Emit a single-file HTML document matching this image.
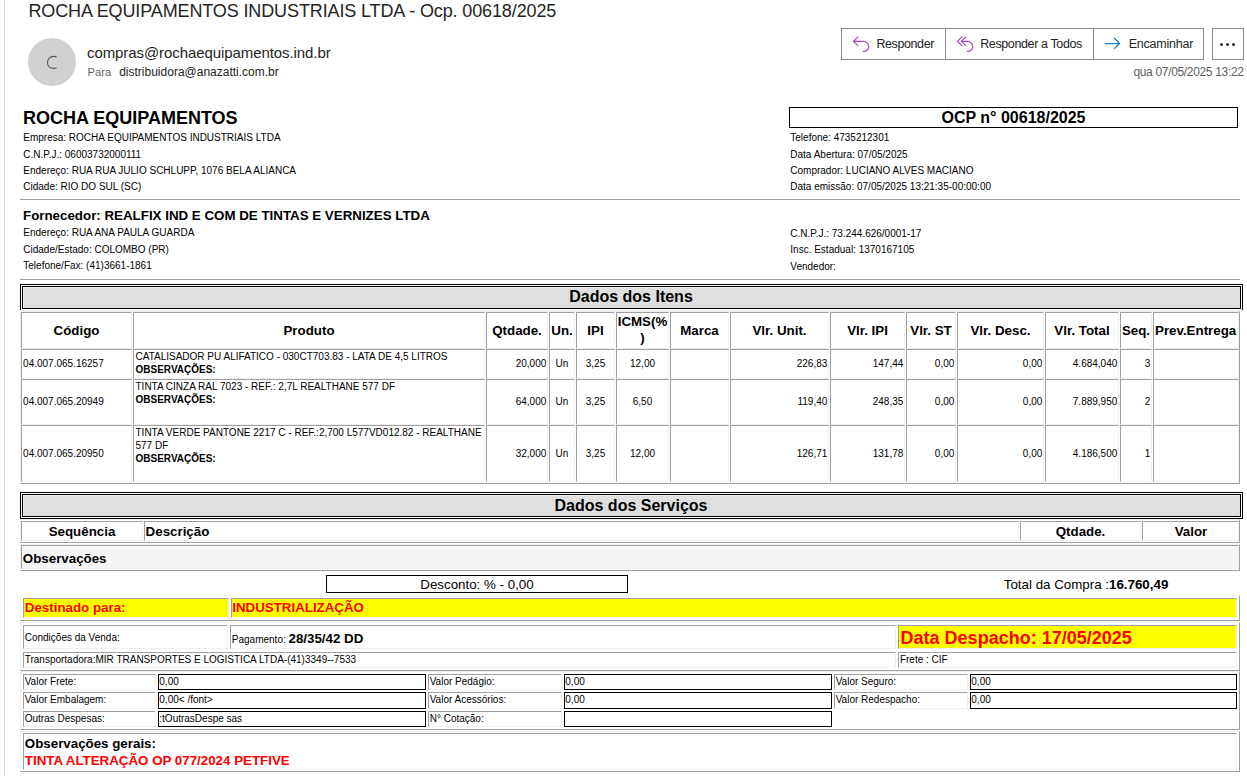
<!DOCTYPE html>
<html><head><meta charset="utf-8">
<style>
*{margin:0;padding:0;box-sizing:border-box}
html,body{width:1247px;height:776px;overflow:hidden;background:#fff}
body{font-family:"Liberation Sans",sans-serif;color:#000;position:relative}
.r{position:absolute}
.t{position:absolute;white-space:nowrap}
svg{position:absolute}
</style></head><body>

<div class="r" style="left:4px;top:0;width:1px;height:776px;background:#d6d6d6"></div>
<div class="t" style="left:28.4px;top:1.56px;font-size:18px;line-height:18px;color:#242424;letter-spacing:-0.12px;">ROCHA EQUIPAMENTOS INDUSTRIAIS LTDA - Ocp. 00618/2025</div>
<div class="r" style="left:28px;top:38px;width:48px;height:48px;border-radius:50%;background:#d1d1d1"></div>
<svg style="left:40px;top:50px" width="24" height="26" viewBox="0 0 24 26"><path d="M16.6 7.1 C15.7 6.6 14.7 6.4 13.6 6.4 C10 6.4 7.5 9 7.5 12.5 C7.5 16 10 18.4 13.4 18.4 C14.7 18.4 15.7 18.2 16.6 17.7" fill="none" stroke="#555" stroke-width="1.1"/></svg>
<div class="t" style="left:87px;top:45.10px;font-size:15px;line-height:15px;color:#242424;letter-spacing:-0.08px;">compras@rochaequipamentos.ind.br</div>
<div class="t" style="left:87.5px;top:66.72px;font-size:11.2px;line-height:11.2px;color:#616161;">Para</div>
<div class="t" style="left:119.2px;top:66.04px;font-size:12px;line-height:12px;color:#242424;">distribuidora@anazatti.com.br</div>
<div class="r" style="left:841px;top:28px;width:363px;height:32px;border:1px solid #8a8a8a;"></div>
<div class="r" style="left:945px;top:29px;width:1px;height:30px;background:#8a8a8a"></div>
<div class="r" style="left:1093px;top:29px;width:1px;height:30px;background:#8a8a8a"></div>
<div class="r" style="left:1212px;top:28px;width:32px;height:32px;border:1px solid #8a8a8a;"></div>
<div class="t" style="left:876.4px;top:37.62px;font-size:12.5px;line-height:12.5px;color:#242424;letter-spacing:-0.4px;">Responder</div>
<div class="t" style="left:980.2px;top:37.62px;font-size:12.5px;line-height:12.5px;color:#242424;letter-spacing:-0.38px;">Responder a Todos</div>
<div class="t" style="left:1128.7px;top:37.62px;font-size:12.5px;line-height:12.5px;color:#242424;letter-spacing:-0.22px;">Encaminhar</div>
<svg style="left:848px;top:32px" width="28" height="24" viewBox="0 0 28 24"><path d="M9.9 5 L5.4 9.3 L9.9 13.6 M5.4 9.3 H15.6 A5.1 5.1 0 0 1 15.6 19.5 H15.2" fill="none" stroke="#a944bd" stroke-width="1.15" stroke-linecap="round" stroke-linejoin="round"/></svg>
<svg style="left:952px;top:32px" width="28" height="24" viewBox="0 0 28 24"><path d="M9.9 4.8 L5.4 9.3 L9.9 13.6 M13.9 4.8 L9.4 9.3 L13.9 13.6 M9.4 9.3 H15.6 A5.1 5.1 0 0 1 15.6 19.5 H15.2" fill="none" stroke="#a944bd" stroke-width="1.15" stroke-linecap="round" stroke-linejoin="round"/></svg>
<svg style="left:1098px;top:32px" width="28" height="24" viewBox="0 0 28 24"><path d="M7.3 11.5 H21.5 M16.4 6.3 L21.6 11.5 L16.4 16.5" fill="none" stroke="#1f83d3" stroke-width="1.25" stroke-linecap="round" stroke-linejoin="round"/></svg>
<div class="r" style="left:1220.0px;top:42.5px;width:3px;height:3px;border-radius:50%;background:#242424"></div>
<div class="r" style="left:1226.0px;top:42.5px;width:3px;height:3px;border-radius:50%;background:#242424"></div>
<div class="r" style="left:1232.0px;top:42.5px;width:3px;height:3px;border-radius:50%;background:#242424"></div>
<div class="t" style="right:3.400000000000091px;top:66.44px;font-size:12px;line-height:12px;color:#616161;letter-spacing:-0.33px;">qua 07/05/2025 13:22</div>
<div class="t" style="left:22.9px;top:109.06px;font-size:18px;line-height:18px;font-weight:bold;color:#000;">ROCHA EQUIPAMENTOS</div>
<div class="t" style="left:23.3px;top:133.13px;font-size:10px;line-height:10px;color:#000;">Empresa: ROCHA EQUIPAMENTOS INDUSTRIAIS LTDA</div>
<div class="t" style="left:23.3px;top:149.83px;font-size:10px;line-height:10px;color:#000;">C.N.P.J.: 06003732000111</div>
<div class="t" style="left:23.3px;top:166.23px;font-size:10px;line-height:10px;color:#000;">Endereço: RUA RUA JULIO SCHLUPP, 1076 BELA ALIANCA</div>
<div class="t" style="left:23.3px;top:181.94px;font-size:10px;line-height:10px;color:#000;">Cidade: RIO DO SUL (SC)</div>
<div class="r" style="left:789px;top:107px;width:449px;height:21px;border:1px solid #000;"></div>
<div class="t" style="left:713.5px;width:600px;text-align:center;top:109.76px;font-size:16px;line-height:16px;font-weight:bold;color:#000;">OCP n° 00618/2025</div>
<div class="t" style="left:790.3px;top:132.94px;font-size:10px;line-height:10px;color:#000;">Telefone: 4735212301</div>
<div class="t" style="left:790.3px;top:149.73px;font-size:10px;line-height:10px;color:#000;">Data Abertura: 07/05/2025</div>
<div class="t" style="left:790.3px;top:165.83px;font-size:10px;line-height:10px;color:#000;">Comprador: LUCIANO ALVES MACIANO</div>
<div class="t" style="left:790.3px;top:181.73px;font-size:10px;line-height:10px;color:#000;">Data emissão: 07/05/2025 13:21:35-00:00:00</div>
<div class="r" style="left:20px;top:199px;width:1220px;height:1px;background:#a0a0a0"></div>
<div class="t" style="left:23px;top:208.62px;font-size:13.33px;line-height:13.33px;font-weight:bold;color:#000;">Fornecedor: REALFIX IND E COM DE TINTAS E VERNIZES LTDA</div>
<div class="t" style="left:23.3px;top:228.13px;font-size:10px;line-height:10px;color:#000;">Endereço: RUA ANA PAULA GUARDA</div>
<div class="t" style="left:23.3px;top:244.83px;font-size:10px;line-height:10px;color:#000;">Cidade/Estado: COLOMBO (PR)</div>
<div class="t" style="left:23.3px;top:260.84px;font-size:10px;line-height:10px;color:#000;">Telefone/Fax: (41)3661-1861</div>
<div class="t" style="left:790.3px;top:228.73px;font-size:10px;line-height:10px;color:#000;">C.N.P.J.: 73.244.626/0001-17</div>
<div class="t" style="left:790.3px;top:245.13px;font-size:10px;line-height:10px;color:#000;">Insc. Estadual: 1370167105</div>
<div class="t" style="left:790.3px;top:261.64px;font-size:10px;line-height:10px;color:#000;">Vendedor:</div>
<div class="r" style="left:20px;top:279px;width:1220px;height:1px;background:#a0a0a0"></div>
<div class="r" style="left:20px;top:284px;width:1223px;height:1px;background:#000"></div>
<div class="r" style="left:20px;top:284px;width:1px;height:27px;background:#000"></div>
<div class="r" style="left:1242px;top:284px;width:1px;height:27px;background:#000"></div>
<div class="r" style="left:20px;top:310px;width:1223px;height:1px;background:#f0f0f0"></div>
<div class="r" style="left:22px;top:286px;width:1219px;height:23px;border:1px solid #000;background:#dfdfdf;box-shadow:inset 1px 1px 0 #f2f2f2;"></div>
<div class="t" style="left:331px;width:600px;text-align:center;top:289.31px;font-size:16px;line-height:16px;font-weight:bold;color:#000;">Dados dos Itens</div>
<div class="r" style="left:20px;top:311px;width:1220px;height:173px;border-top:1px solid #f0f0f0;border-left:1px solid #f0f0f0;border-bottom:1px solid #a0a0a0;border-right:1px solid #a0a0a0;"></div>
<div class="r" style="left:21px;top:312px;width:111px;height:37px;border-top:1px solid #a0a0a0;border-left:1px solid #a0a0a0;border-bottom:1px solid #f0f0f0;border-right:1px solid #f0f0f0;"></div>
<div class="r" style="left:133px;top:312px;width:352px;height:37px;border-top:1px solid #a0a0a0;border-left:1px solid #a0a0a0;border-bottom:1px solid #f0f0f0;border-right:1px solid #f0f0f0;"></div>
<div class="r" style="left:486px;top:312px;width:62px;height:37px;border-top:1px solid #a0a0a0;border-left:1px solid #a0a0a0;border-bottom:1px solid #f0f0f0;border-right:1px solid #f0f0f0;"></div>
<div class="r" style="left:549px;top:312px;width:26px;height:37px;border-top:1px solid #a0a0a0;border-left:1px solid #a0a0a0;border-bottom:1px solid #f0f0f0;border-right:1px solid #f0f0f0;"></div>
<div class="r" style="left:576px;top:312px;width:39px;height:37px;border-top:1px solid #a0a0a0;border-left:1px solid #a0a0a0;border-bottom:1px solid #f0f0f0;border-right:1px solid #f0f0f0;"></div>
<div class="r" style="left:616px;top:312px;width:53px;height:37px;border-top:1px solid #a0a0a0;border-left:1px solid #a0a0a0;border-bottom:1px solid #f0f0f0;border-right:1px solid #f0f0f0;"></div>
<div class="r" style="left:670px;top:312px;width:59px;height:37px;border-top:1px solid #a0a0a0;border-left:1px solid #a0a0a0;border-bottom:1px solid #f0f0f0;border-right:1px solid #f0f0f0;"></div>
<div class="r" style="left:730px;top:312px;width:99px;height:37px;border-top:1px solid #a0a0a0;border-left:1px solid #a0a0a0;border-bottom:1px solid #f0f0f0;border-right:1px solid #f0f0f0;"></div>
<div class="r" style="left:830px;top:312px;width:75px;height:37px;border-top:1px solid #a0a0a0;border-left:1px solid #a0a0a0;border-bottom:1px solid #f0f0f0;border-right:1px solid #f0f0f0;"></div>
<div class="r" style="left:906px;top:312px;width:50px;height:37px;border-top:1px solid #a0a0a0;border-left:1px solid #a0a0a0;border-bottom:1px solid #f0f0f0;border-right:1px solid #f0f0f0;"></div>
<div class="r" style="left:957px;top:312px;width:87px;height:37px;border-top:1px solid #a0a0a0;border-left:1px solid #a0a0a0;border-bottom:1px solid #f0f0f0;border-right:1px solid #f0f0f0;"></div>
<div class="r" style="left:1045px;top:312px;width:74px;height:37px;border-top:1px solid #a0a0a0;border-left:1px solid #a0a0a0;border-bottom:1px solid #f0f0f0;border-right:1px solid #f0f0f0;"></div>
<div class="r" style="left:1120px;top:312px;width:32px;height:37px;border-top:1px solid #a0a0a0;border-left:1px solid #a0a0a0;border-bottom:1px solid #f0f0f0;border-right:1px solid #f0f0f0;"></div>
<div class="r" style="left:1153px;top:312px;width:86px;height:37px;border-top:1px solid #a0a0a0;border-left:1px solid #a0a0a0;border-bottom:1px solid #f0f0f0;border-right:1px solid #f0f0f0;"></div>
<div class="r" style="left:21px;top:349px;width:111px;height:30px;border-top:1px solid #a0a0a0;border-left:1px solid #a0a0a0;border-bottom:1px solid #f0f0f0;border-right:1px solid #f0f0f0;"></div>
<div class="r" style="left:133px;top:349px;width:352px;height:30px;border-top:1px solid #a0a0a0;border-left:1px solid #a0a0a0;border-bottom:1px solid #f0f0f0;border-right:1px solid #f0f0f0;"></div>
<div class="r" style="left:486px;top:349px;width:62px;height:30px;border-top:1px solid #a0a0a0;border-left:1px solid #a0a0a0;border-bottom:1px solid #f0f0f0;border-right:1px solid #f0f0f0;"></div>
<div class="r" style="left:549px;top:349px;width:26px;height:30px;border-top:1px solid #a0a0a0;border-left:1px solid #a0a0a0;border-bottom:1px solid #f0f0f0;border-right:1px solid #f0f0f0;"></div>
<div class="r" style="left:576px;top:349px;width:39px;height:30px;border-top:1px solid #a0a0a0;border-left:1px solid #a0a0a0;border-bottom:1px solid #f0f0f0;border-right:1px solid #f0f0f0;"></div>
<div class="r" style="left:616px;top:349px;width:53px;height:30px;border-top:1px solid #a0a0a0;border-left:1px solid #a0a0a0;border-bottom:1px solid #f0f0f0;border-right:1px solid #f0f0f0;"></div>
<div class="r" style="left:670px;top:349px;width:59px;height:30px;border-top:1px solid #a0a0a0;border-left:1px solid #a0a0a0;border-bottom:1px solid #f0f0f0;border-right:1px solid #f0f0f0;"></div>
<div class="r" style="left:730px;top:349px;width:99px;height:30px;border-top:1px solid #a0a0a0;border-left:1px solid #a0a0a0;border-bottom:1px solid #f0f0f0;border-right:1px solid #f0f0f0;"></div>
<div class="r" style="left:830px;top:349px;width:75px;height:30px;border-top:1px solid #a0a0a0;border-left:1px solid #a0a0a0;border-bottom:1px solid #f0f0f0;border-right:1px solid #f0f0f0;"></div>
<div class="r" style="left:906px;top:349px;width:50px;height:30px;border-top:1px solid #a0a0a0;border-left:1px solid #a0a0a0;border-bottom:1px solid #f0f0f0;border-right:1px solid #f0f0f0;"></div>
<div class="r" style="left:957px;top:349px;width:87px;height:30px;border-top:1px solid #a0a0a0;border-left:1px solid #a0a0a0;border-bottom:1px solid #f0f0f0;border-right:1px solid #f0f0f0;"></div>
<div class="r" style="left:1045px;top:349px;width:74px;height:30px;border-top:1px solid #a0a0a0;border-left:1px solid #a0a0a0;border-bottom:1px solid #f0f0f0;border-right:1px solid #f0f0f0;"></div>
<div class="r" style="left:1120px;top:349px;width:32px;height:30px;border-top:1px solid #a0a0a0;border-left:1px solid #a0a0a0;border-bottom:1px solid #f0f0f0;border-right:1px solid #f0f0f0;"></div>
<div class="r" style="left:1153px;top:349px;width:86px;height:30px;border-top:1px solid #a0a0a0;border-left:1px solid #a0a0a0;border-bottom:1px solid #f0f0f0;border-right:1px solid #f0f0f0;"></div>
<div class="r" style="left:21px;top:379px;width:111px;height:46px;border-top:1px solid #a0a0a0;border-left:1px solid #a0a0a0;border-bottom:1px solid #f0f0f0;border-right:1px solid #f0f0f0;"></div>
<div class="r" style="left:133px;top:379px;width:352px;height:46px;border-top:1px solid #a0a0a0;border-left:1px solid #a0a0a0;border-bottom:1px solid #f0f0f0;border-right:1px solid #f0f0f0;"></div>
<div class="r" style="left:486px;top:379px;width:62px;height:46px;border-top:1px solid #a0a0a0;border-left:1px solid #a0a0a0;border-bottom:1px solid #f0f0f0;border-right:1px solid #f0f0f0;"></div>
<div class="r" style="left:549px;top:379px;width:26px;height:46px;border-top:1px solid #a0a0a0;border-left:1px solid #a0a0a0;border-bottom:1px solid #f0f0f0;border-right:1px solid #f0f0f0;"></div>
<div class="r" style="left:576px;top:379px;width:39px;height:46px;border-top:1px solid #a0a0a0;border-left:1px solid #a0a0a0;border-bottom:1px solid #f0f0f0;border-right:1px solid #f0f0f0;"></div>
<div class="r" style="left:616px;top:379px;width:53px;height:46px;border-top:1px solid #a0a0a0;border-left:1px solid #a0a0a0;border-bottom:1px solid #f0f0f0;border-right:1px solid #f0f0f0;"></div>
<div class="r" style="left:670px;top:379px;width:59px;height:46px;border-top:1px solid #a0a0a0;border-left:1px solid #a0a0a0;border-bottom:1px solid #f0f0f0;border-right:1px solid #f0f0f0;"></div>
<div class="r" style="left:730px;top:379px;width:99px;height:46px;border-top:1px solid #a0a0a0;border-left:1px solid #a0a0a0;border-bottom:1px solid #f0f0f0;border-right:1px solid #f0f0f0;"></div>
<div class="r" style="left:830px;top:379px;width:75px;height:46px;border-top:1px solid #a0a0a0;border-left:1px solid #a0a0a0;border-bottom:1px solid #f0f0f0;border-right:1px solid #f0f0f0;"></div>
<div class="r" style="left:906px;top:379px;width:50px;height:46px;border-top:1px solid #a0a0a0;border-left:1px solid #a0a0a0;border-bottom:1px solid #f0f0f0;border-right:1px solid #f0f0f0;"></div>
<div class="r" style="left:957px;top:379px;width:87px;height:46px;border-top:1px solid #a0a0a0;border-left:1px solid #a0a0a0;border-bottom:1px solid #f0f0f0;border-right:1px solid #f0f0f0;"></div>
<div class="r" style="left:1045px;top:379px;width:74px;height:46px;border-top:1px solid #a0a0a0;border-left:1px solid #a0a0a0;border-bottom:1px solid #f0f0f0;border-right:1px solid #f0f0f0;"></div>
<div class="r" style="left:1120px;top:379px;width:32px;height:46px;border-top:1px solid #a0a0a0;border-left:1px solid #a0a0a0;border-bottom:1px solid #f0f0f0;border-right:1px solid #f0f0f0;"></div>
<div class="r" style="left:1153px;top:379px;width:86px;height:46px;border-top:1px solid #a0a0a0;border-left:1px solid #a0a0a0;border-bottom:1px solid #f0f0f0;border-right:1px solid #f0f0f0;"></div>
<div class="r" style="left:21px;top:425px;width:111px;height:57px;border-top:1px solid #a0a0a0;border-left:1px solid #a0a0a0;border-bottom:1px solid #f0f0f0;border-right:1px solid #f0f0f0;"></div>
<div class="r" style="left:133px;top:425px;width:352px;height:57px;border-top:1px solid #a0a0a0;border-left:1px solid #a0a0a0;border-bottom:1px solid #f0f0f0;border-right:1px solid #f0f0f0;"></div>
<div class="r" style="left:486px;top:425px;width:62px;height:57px;border-top:1px solid #a0a0a0;border-left:1px solid #a0a0a0;border-bottom:1px solid #f0f0f0;border-right:1px solid #f0f0f0;"></div>
<div class="r" style="left:549px;top:425px;width:26px;height:57px;border-top:1px solid #a0a0a0;border-left:1px solid #a0a0a0;border-bottom:1px solid #f0f0f0;border-right:1px solid #f0f0f0;"></div>
<div class="r" style="left:576px;top:425px;width:39px;height:57px;border-top:1px solid #a0a0a0;border-left:1px solid #a0a0a0;border-bottom:1px solid #f0f0f0;border-right:1px solid #f0f0f0;"></div>
<div class="r" style="left:616px;top:425px;width:53px;height:57px;border-top:1px solid #a0a0a0;border-left:1px solid #a0a0a0;border-bottom:1px solid #f0f0f0;border-right:1px solid #f0f0f0;"></div>
<div class="r" style="left:670px;top:425px;width:59px;height:57px;border-top:1px solid #a0a0a0;border-left:1px solid #a0a0a0;border-bottom:1px solid #f0f0f0;border-right:1px solid #f0f0f0;"></div>
<div class="r" style="left:730px;top:425px;width:99px;height:57px;border-top:1px solid #a0a0a0;border-left:1px solid #a0a0a0;border-bottom:1px solid #f0f0f0;border-right:1px solid #f0f0f0;"></div>
<div class="r" style="left:830px;top:425px;width:75px;height:57px;border-top:1px solid #a0a0a0;border-left:1px solid #a0a0a0;border-bottom:1px solid #f0f0f0;border-right:1px solid #f0f0f0;"></div>
<div class="r" style="left:906px;top:425px;width:50px;height:57px;border-top:1px solid #a0a0a0;border-left:1px solid #a0a0a0;border-bottom:1px solid #f0f0f0;border-right:1px solid #f0f0f0;"></div>
<div class="r" style="left:957px;top:425px;width:87px;height:57px;border-top:1px solid #a0a0a0;border-left:1px solid #a0a0a0;border-bottom:1px solid #f0f0f0;border-right:1px solid #f0f0f0;"></div>
<div class="r" style="left:1045px;top:425px;width:74px;height:57px;border-top:1px solid #a0a0a0;border-left:1px solid #a0a0a0;border-bottom:1px solid #f0f0f0;border-right:1px solid #f0f0f0;"></div>
<div class="r" style="left:1120px;top:425px;width:32px;height:57px;border-top:1px solid #a0a0a0;border-left:1px solid #a0a0a0;border-bottom:1px solid #f0f0f0;border-right:1px solid #f0f0f0;"></div>
<div class="r" style="left:1153px;top:425px;width:86px;height:57px;border-top:1px solid #a0a0a0;border-left:1px solid #a0a0a0;border-bottom:1px solid #f0f0f0;border-right:1px solid #f0f0f0;"></div>
<div class="t" style="left:-223.5px;width:600px;text-align:center;top:323.62px;font-size:13.33px;line-height:13.33px;font-weight:bold;color:#000;">Código</div>
<div class="t" style="left:9.0px;width:600px;text-align:center;top:323.62px;font-size:13.33px;line-height:13.33px;font-weight:bold;color:#000;">Produto</div>
<div class="t" style="left:217.0px;width:600px;text-align:center;top:323.62px;font-size:13.33px;line-height:13.33px;font-weight:bold;color:#000;">Qtdade.</div>
<div class="t" style="left:262.0px;width:600px;text-align:center;top:323.62px;font-size:13.33px;line-height:13.33px;font-weight:bold;color:#000;">Un.</div>
<div class="t" style="left:295.5px;width:600px;text-align:center;top:323.62px;font-size:13.33px;line-height:13.33px;font-weight:bold;color:#000;">IPI</div>
<div class="t" style="left:342.5px;width:600px;text-align:center;top:315.02px;font-size:13.33px;line-height:13.33px;font-weight:bold;color:#000;">ICMS(%</div>
<div class="t" style="left:342.5px;width:600px;text-align:center;top:331.02px;font-size:13.33px;line-height:13.33px;font-weight:bold;color:#000;">)</div>
<div class="t" style="left:399.5px;width:600px;text-align:center;top:323.62px;font-size:13.33px;line-height:13.33px;font-weight:bold;color:#000;">Marca</div>
<div class="t" style="left:479.5px;width:600px;text-align:center;top:323.62px;font-size:13.33px;line-height:13.33px;font-weight:bold;color:#000;">Vlr. Unit.</div>
<div class="t" style="left:567.5px;width:600px;text-align:center;top:323.62px;font-size:13.33px;line-height:13.33px;font-weight:bold;color:#000;">Vlr. IPI</div>
<div class="t" style="left:631.0px;width:600px;text-align:center;top:323.62px;font-size:13.33px;line-height:13.33px;font-weight:bold;color:#000;">Vlr. ST</div>
<div class="t" style="left:700.5px;width:600px;text-align:center;top:323.62px;font-size:13.33px;line-height:13.33px;font-weight:bold;color:#000;">Vlr. Desc.</div>
<div class="t" style="left:782.0px;width:600px;text-align:center;top:323.62px;font-size:13.33px;line-height:13.33px;font-weight:bold;color:#000;">Vlr. Total</div>
<div class="t" style="left:836.0px;width:600px;text-align:center;top:323.62px;font-size:13.33px;line-height:13.33px;font-weight:bold;color:#000;">Seq.</div>
<div class="t" style="left:1155px;top:323.62px;font-size:13.33px;line-height:13.33px;font-weight:bold;color:#000;">Prev.Entrega</div>
<div class="t" style="left:23.1px;top:359.14px;font-size:10px;line-height:10px;color:#000;">04.007.065.16257</div>
<div class="t" style="left:135.5px;top:351.64px;font-size:10px;line-height:10px;color:#000;">CATALISADOR PU ALIFATICO - 030CT703.83 - LATA DE 4,5 LITROS</div>
<div class="t" style="left:135.5px;top:364.74px;font-size:10px;line-height:10px;font-weight:bold;color:#000;">OBSERVAÇÕES:</div>
<div class="t" style="right:700.7px;top:359.14px;font-size:10px;line-height:10px;color:#000;">20,000</div>
<div class="t" style="left:262.0px;width:600px;text-align:center;top:359.14px;font-size:10px;line-height:10px;color:#000;">Un</div>
<div class="t" style="left:295.5px;width:600px;text-align:center;top:359.14px;font-size:10px;line-height:10px;color:#000;">3,25</div>
<div class="t" style="left:342.5px;width:600px;text-align:center;top:359.14px;font-size:10px;line-height:10px;color:#000;">12,00</div>
<div class="t" style="right:419.70000000000005px;top:359.14px;font-size:10px;line-height:10px;color:#000;">226,83</div>
<div class="t" style="right:343.70000000000005px;top:359.14px;font-size:10px;line-height:10px;color:#000;">147,44</div>
<div class="t" style="right:292.70000000000005px;top:359.14px;font-size:10px;line-height:10px;color:#000;">0,00</div>
<div class="t" style="right:204.70000000000005px;top:359.14px;font-size:10px;line-height:10px;color:#000;">0,00</div>
<div class="t" style="right:129.70000000000005px;top:359.14px;font-size:10px;line-height:10px;color:#000;">4.684,040</div>
<div class="t" style="right:96.70000000000005px;top:359.14px;font-size:10px;line-height:10px;color:#000;">3</div>
<div class="t" style="left:23.1px;top:397.14px;font-size:10px;line-height:10px;color:#000;">04.007.065.20949</div>
<div class="t" style="left:135.5px;top:381.64px;font-size:10px;line-height:10px;color:#000;">TINTA CINZA RAL 7023 - REF.: 2,7L REALTHANE 577 DF</div>
<div class="t" style="left:135.5px;top:394.74px;font-size:10px;line-height:10px;font-weight:bold;color:#000;">OBSERVAÇÕES:</div>
<div class="t" style="right:700.7px;top:397.14px;font-size:10px;line-height:10px;color:#000;">64,000</div>
<div class="t" style="left:262.0px;width:600px;text-align:center;top:397.14px;font-size:10px;line-height:10px;color:#000;">Un</div>
<div class="t" style="left:295.5px;width:600px;text-align:center;top:397.14px;font-size:10px;line-height:10px;color:#000;">3,25</div>
<div class="t" style="left:342.5px;width:600px;text-align:center;top:397.14px;font-size:10px;line-height:10px;color:#000;">6,50</div>
<div class="t" style="right:419.70000000000005px;top:397.14px;font-size:10px;line-height:10px;color:#000;">119,40</div>
<div class="t" style="right:343.70000000000005px;top:397.14px;font-size:10px;line-height:10px;color:#000;">248,35</div>
<div class="t" style="right:292.70000000000005px;top:397.14px;font-size:10px;line-height:10px;color:#000;">0,00</div>
<div class="t" style="right:204.70000000000005px;top:397.14px;font-size:10px;line-height:10px;color:#000;">0,00</div>
<div class="t" style="right:129.70000000000005px;top:397.14px;font-size:10px;line-height:10px;color:#000;">7.889,950</div>
<div class="t" style="right:96.70000000000005px;top:397.14px;font-size:10px;line-height:10px;color:#000;">2</div>
<div class="t" style="left:23.1px;top:448.64px;font-size:10px;line-height:10px;color:#000;">04.007.065.20950</div>
<div class="t" style="left:135.5px;top:427.64px;font-size:10px;line-height:10px;color:#000;">TINTA VERDE PANTONE 2217 C - REF.:2,700 L577VD012.82 - REALTHANE</div>
<div class="t" style="left:135.5px;top:440.74px;font-size:10px;line-height:10px;color:#000;">577 DF</div>
<div class="t" style="left:135.5px;top:453.84px;font-size:10px;line-height:10px;font-weight:bold;color:#000;">OBSERVAÇÕES:</div>
<div class="t" style="right:700.7px;top:448.64px;font-size:10px;line-height:10px;color:#000;">32,000</div>
<div class="t" style="left:262.0px;width:600px;text-align:center;top:448.64px;font-size:10px;line-height:10px;color:#000;">Un</div>
<div class="t" style="left:295.5px;width:600px;text-align:center;top:448.64px;font-size:10px;line-height:10px;color:#000;">3,25</div>
<div class="t" style="left:342.5px;width:600px;text-align:center;top:448.64px;font-size:10px;line-height:10px;color:#000;">12,00</div>
<div class="t" style="right:419.70000000000005px;top:448.64px;font-size:10px;line-height:10px;color:#000;">126,71</div>
<div class="t" style="right:343.70000000000005px;top:448.64px;font-size:10px;line-height:10px;color:#000;">131,78</div>
<div class="t" style="right:292.70000000000005px;top:448.64px;font-size:10px;line-height:10px;color:#000;">0,00</div>
<div class="t" style="right:204.70000000000005px;top:448.64px;font-size:10px;line-height:10px;color:#000;">0,00</div>
<div class="t" style="right:129.70000000000005px;top:448.64px;font-size:10px;line-height:10px;color:#000;">4.186,500</div>
<div class="t" style="right:96.70000000000005px;top:448.64px;font-size:10px;line-height:10px;color:#000;">1</div>
<div class="r" style="left:20px;top:492px;width:1223px;height:1px;background:#000"></div>
<div class="r" style="left:20px;top:492px;width:1px;height:27px;background:#000"></div>
<div class="r" style="left:1242px;top:492px;width:1px;height:27px;background:#000"></div>
<div class="r" style="left:20px;top:518px;width:1223px;height:1px;background:#000"></div>
<div class="r" style="left:22px;top:494px;width:1219px;height:23px;border:1px solid #000;background:#dfdfdf;box-shadow:inset 1px 1px 0 #f2f2f2;"></div>
<div class="t" style="left:331px;width:600px;text-align:center;top:498.36px;font-size:16px;line-height:16px;font-weight:bold;color:#000;">Dados dos Serviços</div>
<div class="r" style="left:20px;top:519px;width:1220px;height:24px;border-top:1px solid #f0f0f0;border-left:1px solid #f0f0f0;border-bottom:1px solid #a0a0a0;border-right:1px solid #a0a0a0;"></div>
<div class="r" style="left:21px;top:521px;width:122px;height:20px;border-top:1px solid #a0a0a0;border-left:1px solid #a0a0a0;border-bottom:1px solid #f0f0f0;border-right:1px solid #f0f0f0;"></div>
<div class="r" style="left:144px;top:521px;width:875px;height:20px;border-top:1px solid #a0a0a0;border-left:1px solid #a0a0a0;border-bottom:1px solid #f0f0f0;border-right:1px solid #f0f0f0;"></div>
<div class="r" style="left:1020px;top:521px;width:121px;height:20px;border-top:1px solid #a0a0a0;border-left:1px solid #a0a0a0;border-bottom:1px solid #f0f0f0;border-right:1px solid #f0f0f0;"></div>
<div class="r" style="left:1142px;top:521px;width:97px;height:20px;border-top:1px solid #a0a0a0;border-left:1px solid #a0a0a0;border-bottom:1px solid #f0f0f0;border-right:1px solid #f0f0f0;"></div>
<div class="t" style="left:-218px;width:600px;text-align:center;top:524.82px;font-size:13.33px;line-height:13.33px;font-weight:bold;color:#000;">Sequência</div>
<div class="t" style="left:145.6px;top:524.82px;font-size:13.33px;line-height:13.33px;font-weight:bold;color:#000;">Descrição</div>
<div class="t" style="left:780.5px;width:600px;text-align:center;top:524.82px;font-size:13.33px;line-height:13.33px;font-weight:bold;color:#000;">Qtdade.</div>
<div class="t" style="left:891px;width:600px;text-align:center;top:524.82px;font-size:13.33px;line-height:13.33px;font-weight:bold;color:#000;">Valor</div>
<div class="r" style="left:20px;top:544px;width:1220px;height:27px;border-top:1px solid #f0f0f0;border-left:1px solid #f0f0f0;border-bottom:1px solid #a0a0a0;border-right:1px solid #a0a0a0;"></div>
<div class="r" style="left:21px;top:545px;width:1218px;height:24px;border-top:1px solid #a0a0a0;border-left:1px solid #a0a0a0;border-bottom:1px solid #f0f0f0;border-right:1px solid #f0f0f0;background:#f5f5f5;"></div>
<div class="t" style="left:22.8px;top:551.82px;font-size:13.33px;line-height:13.33px;font-weight:bold;color:#000;">Observações</div>
<div class="r" style="left:326px;top:575px;width:302px;height:18px;border:1px solid #000;"></div>
<div class="t" style="left:177px;width:600px;text-align:center;top:577.62px;font-size:13.33px;line-height:13.33px;color:#000;">Desconto: % - 0,00</div>
<div class="t" style="left:1003.8px;top:577.52px;font-size:13.33px;line-height:13.33px;color:#000;">Total da Compra :<b>16.760,49</b></div>
<div class="r" style="left:20px;top:595px;width:1220px;height:26px;border-top:1px solid #f0f0f0;border-left:1px solid #f0f0f0;border-bottom:1px solid #a0a0a0;border-right:1px solid #a0a0a0;"></div>
<div class="r" style="left:23px;top:598px;width:206px;height:20px;border-top:1px solid #a0a0a0;border-left:1px solid #a0a0a0;border-bottom:1px solid #f0f0f0;border-right:1px solid #f0f0f0;background:#ffff00;"></div>
<div class="r" style="left:231px;top:598px;width:1006px;height:20px;border-top:1px solid #a0a0a0;border-left:1px solid #a0a0a0;border-bottom:1px solid #f0f0f0;border-right:1px solid #f0f0f0;background:#ffff00;"></div>
<div class="t" style="left:24.8px;top:601.22px;font-size:13.33px;line-height:13.33px;font-weight:bold;color:#ff0000;">Destinado para:</div>
<div class="t" style="left:232.2px;top:601.22px;font-size:13.33px;line-height:13.33px;font-weight:bold;color:#ff0000;">INDUSTRIALIZAÇÃO</div>
<div class="r" style="left:20px;top:622px;width:1220px;height:49px;border-top:1px solid #f0f0f0;border-left:1px solid #f0f0f0;border-bottom:1px solid #a0a0a0;border-right:1px solid #a0a0a0;"></div>
<div class="r" style="left:23px;top:625px;width:205px;height:24px;border-top:1px solid #a0a0a0;border-left:1px solid #a0a0a0;border-bottom:1px solid #f0f0f0;border-right:1px solid #f0f0f0;"></div>
<div class="r" style="left:230px;top:625px;width:666px;height:24px;border-top:1px solid #a0a0a0;border-left:1px solid #a0a0a0;border-bottom:1px solid #f0f0f0;border-right:1px solid #f0f0f0;"></div>
<div class="r" style="left:898px;top:625px;width:339px;height:24px;border-top:1px solid #a0a0a0;border-left:1px solid #a0a0a0;border-bottom:1px solid #f0f0f0;border-right:1px solid #f0f0f0;background:#ffff00;"></div>
<div class="r" style="left:23px;top:652px;width:873px;height:16px;border-top:1px solid #a0a0a0;border-left:1px solid #a0a0a0;border-bottom:1px solid #f0f0f0;border-right:1px solid #f0f0f0;"></div>
<div class="r" style="left:898px;top:652px;width:339px;height:16px;border-top:1px solid #a0a0a0;border-left:1px solid #a0a0a0;border-bottom:1px solid #f0f0f0;border-right:1px solid #f0f0f0;"></div>
<div class="t" style="left:24.7px;top:633.13px;font-size:10px;line-height:10px;color:#000;">Condições da Venda:</div>
<div class="t" style="left:231.8px;top:634.03px;font-size:10px;line-height:10px;color:#000;">Pagamento: <b style="font-size:13.33px">28/35/42 DD</b></div>
<div class="t" style="left:900.6px;top:628.56px;font-size:18px;line-height:18px;font-weight:bold;color:#ff0000;">Data Despacho: 17/05/2025</div>
<div class="t" style="left:24.7px;top:655.13px;font-size:10px;line-height:10px;color:#000;">Transportadora:MIR TRANSPORTES E LOGISTICA LTDA-(41)3349--7533</div>
<div class="t" style="left:899.9px;top:655.13px;font-size:10px;line-height:10px;color:#000;">Frete : CIF</div>
<div class="r" style="left:20px;top:671px;width:1220px;height:59px;border-top:1px solid #f0f0f0;border-left:1px solid #f0f0f0;border-bottom:1px solid #a0a0a0;border-right:1px solid #a0a0a0;"></div>
<div class="r" style="left:23px;top:674px;width:133px;height:16px;border-top:1px solid #a0a0a0;border-left:1px solid #a0a0a0;border-bottom:1px solid #f0f0f0;border-right:1px solid #f0f0f0;"></div>
<div class="r" style="left:158px;top:674px;width:268px;height:16px;border:1px solid #000;"></div>
<div class="t" style="left:24.7px;top:676.74px;font-size:10px;line-height:10px;color:#000;">Valor Frete:</div>
<div class="t" style="left:159.3px;top:676.74px;font-size:10px;line-height:10px;color:#000;">0,00</div>
<div class="r" style="left:23px;top:692px;width:133px;height:17px;border-top:1px solid #a0a0a0;border-left:1px solid #a0a0a0;border-bottom:1px solid #f0f0f0;border-right:1px solid #f0f0f0;"></div>
<div class="r" style="left:158px;top:692px;width:268px;height:17px;border:1px solid #000;"></div>
<div class="t" style="left:24.7px;top:694.74px;font-size:10px;line-height:10px;color:#000;">Valor Embalagem:</div>
<div class="t" style="left:159.3px;top:694.74px;font-size:10px;line-height:10px;color:#000;">0,00&lt; /font&gt;</div>
<div class="r" style="left:23px;top:711px;width:133px;height:16px;border-top:1px solid #a0a0a0;border-left:1px solid #a0a0a0;border-bottom:1px solid #f0f0f0;border-right:1px solid #f0f0f0;"></div>
<div class="r" style="left:158px;top:711px;width:268px;height:16px;border:1px solid #000;"></div>
<div class="t" style="left:24.7px;top:713.74px;font-size:10px;line-height:10px;color:#000;">Outras Despesas:</div>
<div class="t" style="left:159.3px;top:713.74px;font-size:10px;line-height:10px;color:#000;">:tOutrasDespe sas</div>
<div class="r" style="left:428px;top:674px;width:134px;height:16px;border-top:1px solid #a0a0a0;border-left:1px solid #a0a0a0;border-bottom:1px solid #f0f0f0;border-right:1px solid #f0f0f0;"></div>
<div class="r" style="left:564px;top:674px;width:268px;height:16px;border:1px solid #000;"></div>
<div class="t" style="left:429.7px;top:676.74px;font-size:10px;line-height:10px;color:#000;">Valor Pedágio:</div>
<div class="t" style="left:565.3px;top:676.74px;font-size:10px;line-height:10px;color:#000;">0,00</div>
<div class="r" style="left:428px;top:692px;width:134px;height:17px;border-top:1px solid #a0a0a0;border-left:1px solid #a0a0a0;border-bottom:1px solid #f0f0f0;border-right:1px solid #f0f0f0;"></div>
<div class="r" style="left:564px;top:692px;width:268px;height:17px;border:1px solid #000;"></div>
<div class="t" style="left:429.7px;top:694.74px;font-size:10px;line-height:10px;color:#000;">Valor Acessórios:</div>
<div class="t" style="left:565.3px;top:694.74px;font-size:10px;line-height:10px;color:#000;">0,00</div>
<div class="r" style="left:428px;top:711px;width:134px;height:16px;border-top:1px solid #a0a0a0;border-left:1px solid #a0a0a0;border-bottom:1px solid #f0f0f0;border-right:1px solid #f0f0f0;"></div>
<div class="r" style="left:564px;top:711px;width:268px;height:16px;border:1px solid #000;"></div>
<div class="t" style="left:429.7px;top:713.74px;font-size:10px;line-height:10px;color:#000;">N° Cotação:</div>
<div class="r" style="left:834px;top:674px;width:134px;height:16px;border-top:1px solid #a0a0a0;border-left:1px solid #a0a0a0;border-bottom:1px solid #f0f0f0;border-right:1px solid #f0f0f0;"></div>
<div class="r" style="left:970px;top:674px;width:267px;height:16px;border:1px solid #000;"></div>
<div class="t" style="left:835.6999999999999px;top:676.74px;font-size:10px;line-height:10px;color:#000;">Valor Seguro:</div>
<div class="t" style="left:971.3px;top:676.74px;font-size:10px;line-height:10px;color:#000;">0,00</div>
<div class="r" style="left:834px;top:692px;width:134px;height:17px;border-top:1px solid #a0a0a0;border-left:1px solid #a0a0a0;border-bottom:1px solid #f0f0f0;border-right:1px solid #f0f0f0;"></div>
<div class="r" style="left:970px;top:692px;width:267px;height:17px;border:1px solid #000;"></div>
<div class="t" style="left:835.6999999999999px;top:694.74px;font-size:10px;line-height:10px;color:#000;">Valor Redespacho:</div>
<div class="t" style="left:971.3px;top:694.74px;font-size:10px;line-height:10px;color:#000;">0,00</div>
<div class="r" style="left:20px;top:731px;width:1220px;height:41px;border-top:1px solid #f0f0f0;border-left:1px solid #f0f0f0;border-bottom:1px solid #a0a0a0;border-right:1px solid #a0a0a0;"></div>
<div class="r" style="left:23px;top:733px;width:1214px;height:37px;border-top:1px solid #a0a0a0;border-left:1px solid #a0a0a0;border-bottom:1px solid #f0f0f0;border-right:1px solid #f0f0f0;"></div>
<div class="t" style="left:24.8px;top:736.52px;font-size:13.33px;line-height:13.33px;font-weight:bold;color:#000;">Observações gerais:</div>
<div class="t" style="left:24.8px;top:753.52px;font-size:13.33px;line-height:13.33px;font-weight:bold;color:#ff0000;">TINTA ALTERAÇÃO OP 077/2024 PETFIVE</div>
</body></html>
